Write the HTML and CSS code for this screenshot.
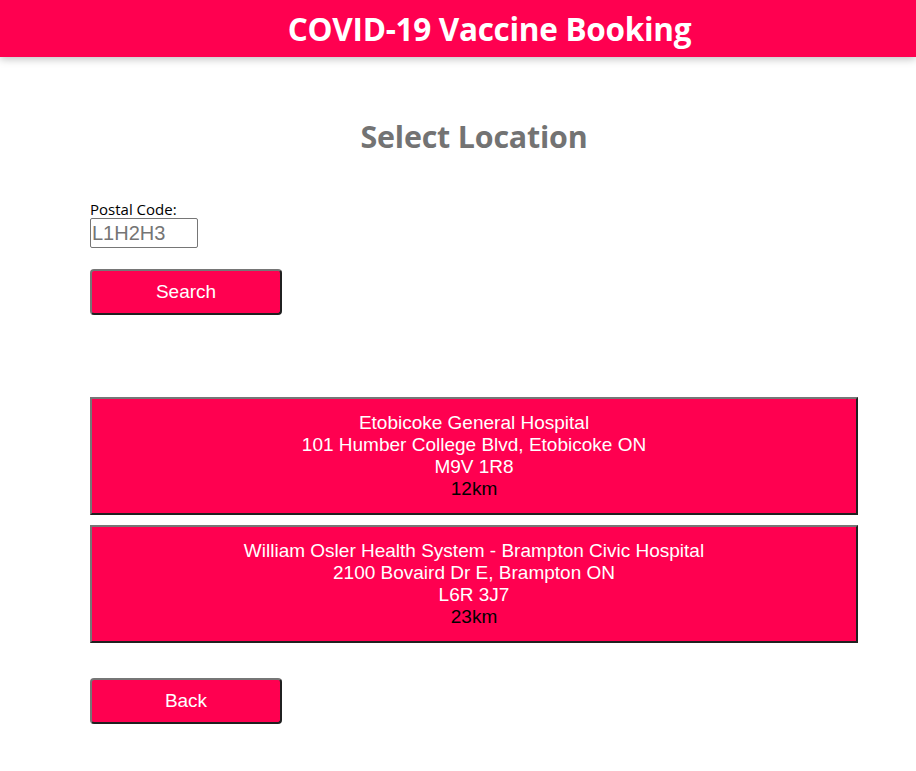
FILE: index.html
```html
<!DOCTYPE html>
<html>
<head>
<meta charset="utf-8">
<link rel="stylesheet" href="styles.css">
</head>
<body>
<header class="topbar">
  <h1 class="brand">COVID-19 Vaccine Booking</h1>
</header>
<main class="content">
  <h2 class="page-title">Select Location</h2>
  <div class="field">
    <label class="field-label" for="postal">Postal Code:</label>
    <input class="field-input" id="postal" type="text" placeholder="L1H2H3">
  </div>
  <button class="btn">Search</button>
  <div class="results">
    <div class="location">
      <div class="loc-line">Etobicoke General Hospital</div>
      <div class="loc-line">101 Humber College Blvd, Etobicoke ON</div>
      <div class="loc-line">M9V 1R8</div>
      <div class="loc-dist">12km</div>
    </div>
    <div class="location">
      <div class="loc-line">William Osler Health System - Brampton Civic Hospital</div>
      <div class="loc-line">2100 Bovaird Dr E, Brampton ON</div>
      <div class="loc-line">L6R 3J7</div>
      <div class="loc-dist">23km</div>
    </div>
  </div>
  <button class="btn btn-back">Back</button>
</main>
</body>
</html>
```

FILE: styles.css
```css
html, body {
  margin: 0;
  padding: 0;
  background: #ffffff;
}
body {
  font-family: "Open Sans", "Noto Sans", sans-serif;
}
.topbar {
  height: 57px;
  background: #ff0050;
  box-shadow: 0 2px 8px rgba(0, 0, 0, 0.25);
  display: flex;
  align-items: center;
  justify-content: center;
  padding-left: 63px;
}
.brand {
  margin: 0;
  color: #ffffff;
  font-size: 31.5px;
  font-weight: 700;
  line-height: 57px;
  letter-spacing: -0.3px;
}
.content {
  width: 768px;
  margin-left: 90px;
  display: flex;
  flex-direction: column;
  align-items: flex-start;
}
.page-title {
  align-self: stretch;
  text-align: center;
  margin: 58px 0 0 0;
  height: 44px;
  line-height: 44px;
  font-size: 30.4px;
  font-weight: 700;
  color: #737373;
  letter-spacing: -0.2px;
}
.field {
  margin-top: 42px;
  display: flex;
  flex-direction: column;
  align-items: flex-start;
}
.field-label {
  font-size: 15px;
  line-height: 17px;
  color: #000000;
}
.field-input {
  box-sizing: border-box;
  width: 108px;
  height: 30px;
  margin: 0;
  padding: 1px 1px;
  border: 1px solid #767676;
  border-radius: 2px;
  font-family: "Liberation Sans", Arial, sans-serif;
  font-size: 20px;
}
.field-input::placeholder {
  color: #757575;
}
.btn {
  box-sizing: border-box;
  width: 192px;
  height: 46px;
  margin-top: 21px;
  background: #ff0050;
  color: #ffffff;
  font-family: "Liberation Sans", Arial, sans-serif;
  font-size: 19px;
  border-width: 2px;
  border-style: solid;
  border-color: #767676 #202020 #202020 #767676;
  border-radius: 4px;
  padding: 0;
}
.results {
  align-self: stretch;
  margin-top: 82px;
  display: flex;
  flex-direction: column;
  gap: 10px;
}
.location {
  box-sizing: border-box;
  height: 118px;
  padding: 13px 0;
  background: #ff0050;
  border-width: 2px;
  border-style: solid;
  border-color: #767676 #202020 #202020 #767676;
  text-align: center;
  font-family: "Liberation Sans", Arial, sans-serif;
  font-size: 19px;
  line-height: 22px;
}
.loc-line {
  color: #ffffff;
}
.loc-dist {
  color: #000000;
}
.btn-back {
  margin-top: 35px;
}
```
